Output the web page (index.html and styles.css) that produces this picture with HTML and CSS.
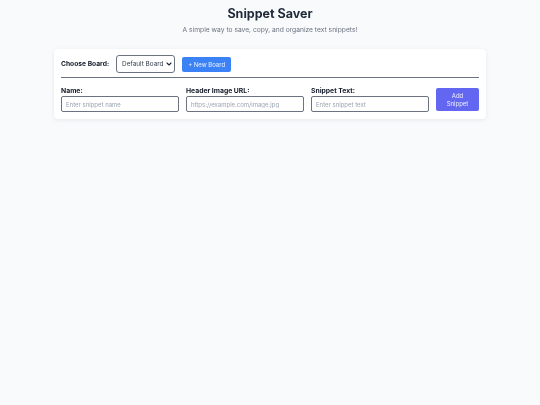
FILE: index.html
```html
<!DOCTYPE html>
<html lang="en">
<head>
<meta charset="utf-8">
<title>Snippet Saver</title>
<link rel="stylesheet" href="styles.css">
</head>
<body>
  <header class="page-header">
    <h1 class="title">Snippet Saver</h1>
    <p class="subtitle">A simple way to save, copy, and organize text snippets!</p>
  </header>
  <main class="card">
    <div class="board-row">
      <label class="board-label" for="board">Choose Board:</label>
      <div class="select-wrap">
        <select id="board" class="board-select">
          <option>Default Board</option>
        </select>
        <svg class="chevron" width="6" height="4" viewBox="0 0 6 4" aria-hidden="true">
          <path d="M1 1 L3 3 L5 1" fill="none" stroke="#1f2937" stroke-width="1.1" stroke-linecap="round" stroke-linejoin="round"/>
        </svg>
      </div>
      <button class="btn btn-blue" type="button">+ New Board</button>
    </div>
    <form class="snippet-form">
      <div class="field">
        <label class="field-label" for="name">Name:</label>
        <input id="name" class="field-input" type="text" placeholder="Enter snippet name">
      </div>
      <div class="field">
        <label class="field-label" for="url">Header Image URL:</label>
        <input id="url" class="field-input" type="text" placeholder="https://example.com/image.jpg">
      </div>
      <div class="field">
        <label class="field-label" for="text">Snippet Text:</label>
        <input id="text" class="field-input" type="text" placeholder="Enter snippet text">
      </div>
      <button class="btn btn-indigo" type="button">Add Snippet</button>
    </form>
  </main>
</body>
</html>
```
FILE: styles.css
```css
* { box-sizing: border-box; }
html, body { margin: 0; padding: 0; }
body {
  background: #f8fafc;
  font-family: Inter, "Noto Sans", "Liberation Sans", sans-serif;
  color: #1f2937;
  min-height: 405px;
}
.page-header {
  text-align: center;
  padding-top: 6px;
  will-change: transform;
}
.title {
  margin: 0;
  font-size: 12.5px;
  line-height: 16px;
  font-weight: 700;
  color: #1f2937;
}
.subtitle {
  margin: 3px 0 0;
  font-size: 6.7px;
  line-height: 10px;
  color: #6b7280;
}
.card {
  width: 432px;
  margin: 14px auto 0;
  background: #ffffff;
  border-radius: 4px;
  box-shadow: 0 1px 4px rgba(15, 23, 42, 0.08);
  padding: 6px 7px 7px;
  will-change: transform;
}
.board-row {
  display: flex;
  align-items: center;
  gap: 7px;
  padding-bottom: 4px;
  border-bottom: 1px solid #6b7280;
}
.board-label {
  font-size: 6.7px;
  font-weight: 700;
  color: #111827;
}
.select-wrap {
  position: relative;
  display: flex;
}
.board-select {
  -webkit-appearance: none;
  appearance: none;
  height: 18px;
  width: 59px;
  font-family: inherit;
  font-size: 6.4px;
  color: #374151;
  border: 1px solid #6b7280;
  border-radius: 3px;
  background: #fff;
  padding: 0 8px 0 5px;
  margin: 0;
}
.chevron {
  position: absolute;
  right: 3px;
  top: 7px;
  pointer-events: none;
}
.btn {
  font-family: inherit;
  border: none;
  border-radius: 2px;
  color: #eef2ff;
  cursor: pointer;
  margin: 0;
}
.btn-blue {
  background: #3b82f6;
  font-size: 6px;
  height: 15px;
  width: 49px;
  padding: 0;
}
.snippet-form {
  display: flex;
  align-items: flex-end;
  gap: 7px;
  margin-top: 8px;
}
.field {
  flex: 1;
  display: flex;
  flex-direction: column;
}
.field-label {
  font-size: 6.8px;
  line-height: 9px;
  font-weight: 700;
  color: #111827;
  margin-bottom: 1px;
}
.field-input {
  height: 16px;
  width: 100%;
  font-family: inherit;
  font-size: 6px;
  border: 1px solid #6b7280;
  border-radius: 2px;
  padding: 0 4px;
  background: #fff;
  color: #374151;
  margin: 0;
}
.field-input::placeholder { color: #9ca3af; }
.btn-indigo {
  background: #6366f1;
  width: 43px;
  height: 23px;
  font-size: 6px;
  line-height: 8px;
  padding: 0 6px;
  margin-bottom: 1px;
}
```
